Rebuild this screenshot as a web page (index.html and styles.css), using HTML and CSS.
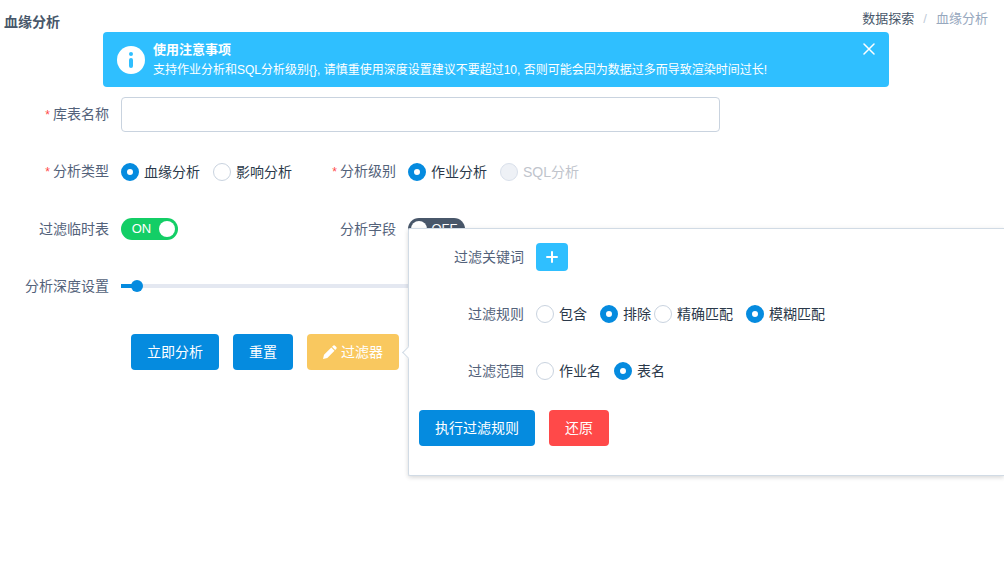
FILE: index.html
```html
<!DOCTYPE html>
<html lang="zh-CN">
<head>
<meta charset="utf-8">
<meta name="viewport" content="width=device-width, initial-scale=1">
<title>血缘分析</title>
<link rel="stylesheet" href="styles.css">
</head>
<body>
<header class="page-header">
  <h1 class="page-title">血缘分析</h1>
  <nav class="breadcrumb">
    <a class="breadcrumb-link" href="#">数据探索</a>
    <span class="breadcrumb-sep">/</span>
    <span class="breadcrumb-current">血缘分析</span>
  </nav>
</header>

<main>
  <section class="alert">
    <svg class="alert-icon" viewBox="0 0 28 28" aria-hidden="true">
      <circle cx="14" cy="14" r="14" fill="#fff"/>
      <circle cx="14" cy="8" r="2" fill="#2fbfff"/>
      <path d="M14 14v6" stroke="#2fbfff" stroke-width="4" stroke-linecap="round"/>
    </svg>
    <div class="alert-body">
      <h2 class="alert-title">使用注意事项</h2>
      <p class="alert-text">支持作业分析和SQL分析级别{}, 请慎重使用深度设置建议不要超过10, 否则可能会因为数据过多而导致渲染时间过长!</p>
    </div>
    <button class="alert-close" type="button" aria-label="关闭">
      <svg class="close-icon" viewBox="0 0 12 12" aria-hidden="true"><path d="M1 1l10 10M11 1L1 11" stroke="#fff" stroke-width="1.500" stroke-linecap="round"/></svg>
    </button>
  </section>

  <form class="form">
    <div class="row">
      <label class="label required" for="table-name">库表名称</label>
      <input class="text-input" id="table-name" type="text">
    </div>

    <div class="row-pair">
      <div class="row" role="radiogroup" aria-labelledby="type-label">
        <span class="label required" id="type-label">分析类型</span>
        <div class="options">
          <label class="option"><input class="radio" type="radio" name="type" checked>血缘分析</label>
          <label class="option"><input class="radio" type="radio" name="type">影响分析</label>
        </div>
      </div>
      <div class="row" role="radiogroup" aria-labelledby="level-label">
        <span class="label required" id="level-label">分析级别</span>
        <div class="options">
          <label class="option"><input class="radio" type="radio" name="level" checked>作业分析</label>
          <label class="option option-disabled"><input class="radio" type="radio" name="level" disabled>SQL分析</label>
        </div>
      </div>
    </div>

    <div class="row-pair">
      <div class="row">
        <label class="label" for="temp-switch">过滤临时表</label>
        <label class="switch"><input class="switch-input" id="temp-switch" type="checkbox" checked><span class="switch-text">ON</span><span class="switch-knob"></span></label>
      </div>
      <div class="row">
        <label class="label" for="field-switch">分析字段</label>
        <label class="switch"><input class="switch-input" id="field-switch" type="checkbox"><span class="switch-knob"></span><span class="switch-text">OFF</span></label>
      </div>
    </div>

    <div class="row">
      <label class="label" for="depth">分析深度设置</label>
      <input class="slider" id="depth" type="range" min="0" max="60" value="1">
    </div>

    <div class="actions">
      <button class="button primary" type="button">立即分析</button>
      <button class="button primary" type="button">重置</button>
      <div class="filter">
        <button class="button warning" type="button" aria-expanded="true">
          <svg class="edit-icon" viewBox="0 0 14 14" aria-hidden="true"><path d="M0 14l1-4.300 7.300-7.200 3.200 3.200-7.200 7.300zM9 1.800l.9-.9q1.200-1.200 2.400 0l.8.8q1.200 1.200 0 2.400l-.9.9z" fill="#fff"/></svg>过滤器
        </button>
        <div class="popover">
          <div class="row">
            <span class="label">过滤关键词</span>
            <button class="add" type="button" aria-label="添加过滤关键词">
              <svg class="add-icon" viewBox="0 0 12 12" aria-hidden="true"><path d="M6 1v10M1 6h10" stroke="#fff" stroke-width="2" stroke-linecap="round"/></svg>
            </button>
          </div>
          <div class="row">
            <span class="label">过滤规则</span>
            <div class="option-groups">
              <div class="options" role="radiogroup" aria-label="过滤规则">
                <label class="option"><input class="radio" type="radio" name="rule">包含</label>
                <label class="option"><input class="radio" type="radio" name="rule" checked>排除</label>
              </div>
              <div class="options" role="radiogroup" aria-label="匹配方式">
                <label class="option"><input class="radio" type="radio" name="match">精确匹配</label>
                <label class="option"><input class="radio" type="radio" name="match" checked>模糊匹配</label>
              </div>
            </div>
          </div>
          <div class="row" role="radiogroup" aria-labelledby="scope-label">
            <span class="label" id="scope-label">过滤范围</span>
            <div class="options">
              <label class="option"><input class="radio" type="radio" name="scope">作业名</label>
              <label class="option"><input class="radio" type="radio" name="scope" checked>表名</label>
            </div>
          </div>
          <div class="popover-actions">
            <button class="button primary" type="button">执行过滤规则</button>
            <button class="button danger" type="button">还原</button>
          </div>
        </div>
      </div>
    </div>
  </form>
</main>
</body>
</html>
```
FILE: styles.css
```css
* {
  box-sizing: border-box;
}

body {
  min-height: 100vh;
  margin: 0;
  background: #fff;
  color: #53627a;
  font-family: "Liberation Sans", "Noto Sans CJK SC", sans-serif;
  font-size: 14px;
  line-height: 20px;
}

button,
input {
  margin: 0;
  font: inherit;
}

.page-header {
  display: flex;
  align-items: flex-start;
  justify-content: space-between;
  height: 32px;
  padding: 9px 16px 0 4px;
}

.page-title {
  margin: 0;
  padding-top: 3px;
  color: #48576a;
  font-size: 14px;
  line-height: 20px;
}

.breadcrumb {
  display: flex;
  gap: 9px;
  font-size: 13px;
}

.breadcrumb-link {
  color: #48576a;
  text-decoration: none;
}

.breadcrumb-sep {
  color: #bfcbd9;
}

.breadcrumb-current {
  color: #97a8be;
}

/* Alert */
.alert {
  display: flex;
  align-items: center;
  gap: 8px;
  margin: 0 115px 0 103px;
  padding: 7px 14px;
  border-radius: 4px;
  background: #2fbfff;
  color: #fff;
}

.alert-icon {
  flex: none;
  width: 28px;
  height: 28px;
}

.alert-body {
  flex: 1;
}

.alert-title {
  margin: 0;
  font-size: 13px;
  line-height: 21px;
}

.alert-text {
  margin: 0;
  font-size: 12px;
  line-height: 20px;
}

.alert-close {
  display: flex;
  align-self: flex-start;
  padding: 4px 0;
  border: 0;
  background: none;
}

.close-icon,
.add-icon {
  width: 12px;
  height: 12px;
}

/* Form */
.form {
  display: flex;
  flex-direction: column;
  gap: 22px;
  padding: 10px 284px 0 0;
}

.row-pair {
  display: grid;
  grid-template-columns: 287px 1fr;
}

.row {
  display: flex;
  align-items: center;
  gap: 12px;
  height: 35px;
}

.label {
  flex: none;
  width: 109px;
  text-align: right;
}

.required::before {
  content: "*";
  margin-right: 3px;
  color: #ff4949;
  font-size: 12px;
}

.text-input {
  flex: 1;
  min-width: 0;
  height: 35px;
  padding: 0 10px;
  border: 1px solid #c9d3df;
  border-radius: 4px;
  background: #fff;
  color: #1f2d3d;
}

.option-groups {
  display: flex;
  gap: 3px;
}

.options {
  display: flex;
  gap: 13px;
}

.option {
  display: flex;
  align-items: center;
  gap: 5px;
  color: #2b394a;
  white-space: nowrap;
}

.option-disabled {
  color: #c0c4cc;
}

.radio {
  appearance: none;
  width: 18px;
  height: 18px;
  border: 1px solid #c9d3df;
  border-radius: 50%;
  background: #fff;
}

.radio:checked {
  border: 6px solid #058bdf;
}

.radio:disabled {
  border-color: #d9e0eb;
  background: #eef1f6;
}

.switch {
  display: flex;
  align-items: center;
  width: 57px;
  height: 22px;
  padding: 0 3px;
  border-radius: 11px;
  background: #48576a;
  color: #fff;
  font-size: 13px;
}

.switch:has(:checked) {
  background: #13ce66;
}

.switch-input {
  position: absolute;
  opacity: 0;
}

.switch-text {
  flex: 1;
  text-align: center;
}

.switch-knob {
  flex: none;
  width: 16px;
  height: 16px;
  border-radius: 50%;
  background: #fff;
}

.slider {
  appearance: none;
  flex: 1;
  min-width: 0;
  height: 12px;
  background: linear-gradient(#058bdf, #058bdf) left / 2% 4px no-repeat,
    linear-gradient(#e4e8f1, #e4e8f1) center / 100% 4px no-repeat;
}

.slider::-webkit-slider-thumb {
  appearance: none;
  width: 12px;
  height: 12px;
  border-radius: 50%;
  background: #058bdf;
}

/* Buttons */
.actions {
  display: flex;
  gap: 14px;
  padding: 9px 0 0 131px;
}

.button {
  display: flex;
  align-items: center;
  justify-content: center;
  gap: 4px;
  height: 36px;
  padding: 0 16px;
  border: 0;
  border-radius: 4px;
  color: #fff;
  white-space: nowrap;
}

.primary {
  background: #058bdf;
}

.warning {
  background: #f9c85f;
}

.danger {
  background: #ff4949;
}

.edit-icon {
  width: 14px;
  height: 14px;
}

/* Filter popover: reaches the window's right edge */
.filter {
  position: relative;
}

.popover {
  position: absolute;
  top: 50%;
  left: calc(100% + 9px);
  display: flex;
  flex-direction: column;
  gap: 22px;
  width: calc(100vw - 408px);
  padding: 10px 10px 29px;
  border: 1px solid #d1dbe5;
  border-right: 0;
  border-radius: 2px 0 0 2px;
  background: #fff;
  box-shadow: 0 2px 4px rgba(0, 0, 0, 0.12), 0 0 6px rgba(0, 0, 0, 0.04);
  transform: translateY(-50%);
}

.popover::before {
  content: "";
  position: absolute;
  top: 50%;
  left: -5px;
  width: 8px;
  height: 8px;
  margin-top: -4px;
  border: solid #d1dbe5;
  border-width: 0 0 1px 1px;
  background: #fff;
  transform: rotate(45deg);
}

.popover .label {
  width: 105px;
}

.add {
  display: flex;
  align-items: center;
  justify-content: center;
  width: 32px;
  height: 28px;
  padding: 0;
  border: 0;
  border-radius: 4px;
  background: #2fbfff;
}

.popover-actions {
  display: flex;
  gap: 14px;
}
```
